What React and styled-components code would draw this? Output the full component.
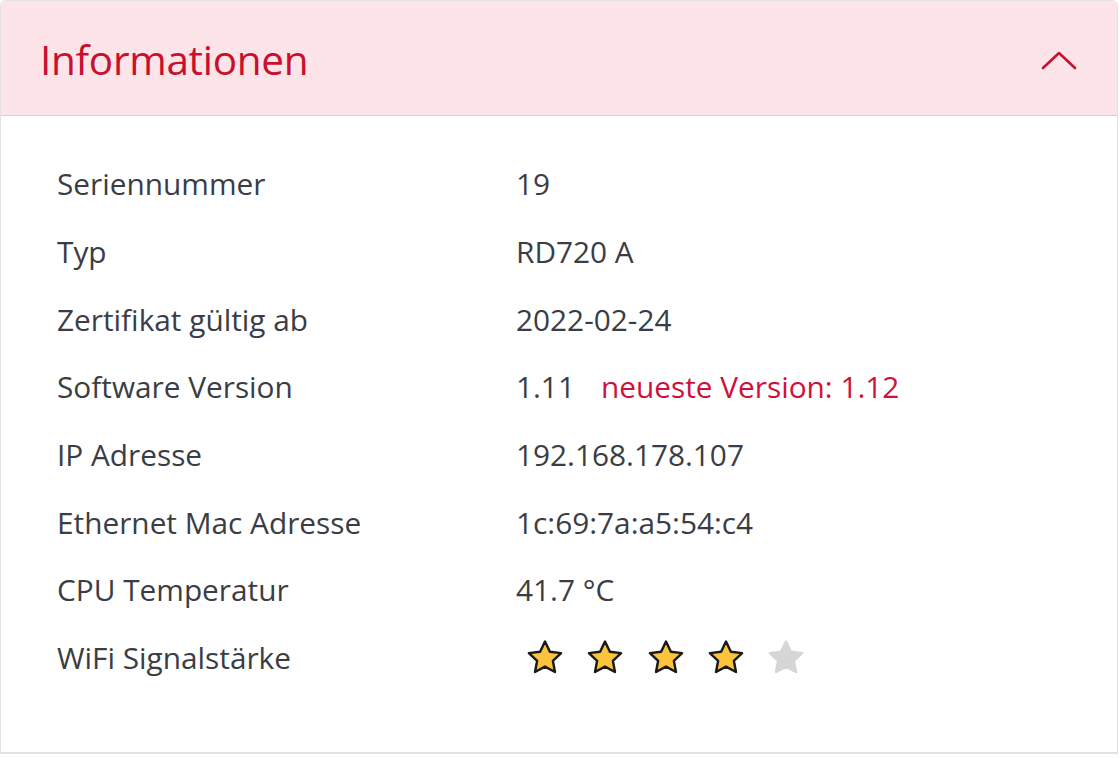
import * as React from 'react';
import styled, { createGlobalStyle } from 'styled-components';

const Global = createGlobalStyle`
  html, body {
    margin: 0;
    padding: 0;
    background: #ffffff;
  }
  body {
    font-family: "Open Sans", "Noto Sans", sans-serif;
  }
`;

const Card = styled.section`
  width: 1118px;
  height: 754px;
  box-sizing: border-box;
  border: 1px solid #e3e3e3;
  border-bottom-width: 2px;
  border-radius: 6px 6px 0 0;
  overflow: hidden;
  background: #ffffff;
`;

const Header = styled.header`
  height: 115px;
  box-sizing: border-box;
  display: flex;
  align-items: center;
  justify-content: space-between;
  padding: 3px 40px 0 39px;
  background: #fde4e8;
  border-bottom: 1px solid #e6c9cf;
`;

const Title = styled.h2`
  margin: 0;
  font-size: 40.5px;
  font-weight: 400;
  color: #c8102e;
  letter-spacing: -0.3px;
`;

const Body = styled.div`
  padding: 34px 56px 0 56px;
`;

const Row = styled.div`
  display: grid;
  grid-template-columns: 459px 1fr;
  align-items: center;
  height: 67.7px;
  font-size: 29.8px;
  color: #3b3d45;
`;

const Value = styled.div`
  display: flex;
  align-items: center;
  gap: ${(p) => p.$gap || 0}px;
`;

const Note = styled.span`
  color: #d0103a;
`;

const Stars = styled.div`
  display: flex;
  align-items: center;
  gap: 18.3px;
  padding-left: 8px;
`;

const Chevron = () => (
  <svg width="36" height="20" viewBox="0 0 36 20" fill="none">
    <path d="M2 18 L18 3 L34 18" stroke="#c8102e" strokeWidth="2.6" strokeLinecap="round" strokeLinejoin="round" />
  </svg>
);

const Star = ({ on }) => (
  <svg width="42" height="42" viewBox="0 0 24 24">
    <path
      d="M12 2.6 L14.8 8.4 L21.2 9.2 L16.5 13.6 L17.7 20 L12 16.9 L6.3 20 L7.5 13.6 L2.8 9.2 L9.2 8.4 Z"
      fill={on ? '#fcc43c' : '#d6d6d6'}
      stroke={on ? '#1a1a1a' : '#d6d6d6'}
      strokeWidth="1.4"
      strokeLinejoin="round"
    />
  </svg>
);

const rows = [
  ['Seriennummer', '19'],
  ['Typ', 'RD720 A'],
  ['Zertifikat gültig ab', '2022-02-24'],
  ['Software Version', 'version'],
  ['IP Adresse', '192.168.178.107'],
  ['Ethernet Mac Adresse', '1c:69:7a:a5:54:c4'],
  ['CPU Temperatur', '41.7 °C'],
  ['WiFi Signalstärke', 'wifi'],
];

export default function App() {
  const signal = 4;
  return <React.Fragment>
    <Global />
    <Card>
      <Header>
        <Title>Informationen</Title>
        <Chevron />
      </Header>
      <Body>
        {rows.map(([label, value]) => (
          <Row key={label}>
            <div>{label}</div>
            {
              value === 'version'
              ? <Value $gap={26}>
                  <span>1.11</span>
                  <Note>neueste Version: 1.12</Note>
                </Value>
              : value === 'wifi'
                ? <Stars>
                    {[1, 2, 3, 4, 5].map((i) => <Star key={i} on={i <= signal} />)}
                  </Stars>
                : <Value>{value}</Value>
            }
          </Row>
        ))}
      </Body>
    </Card>
  </React.Fragment>;
}
